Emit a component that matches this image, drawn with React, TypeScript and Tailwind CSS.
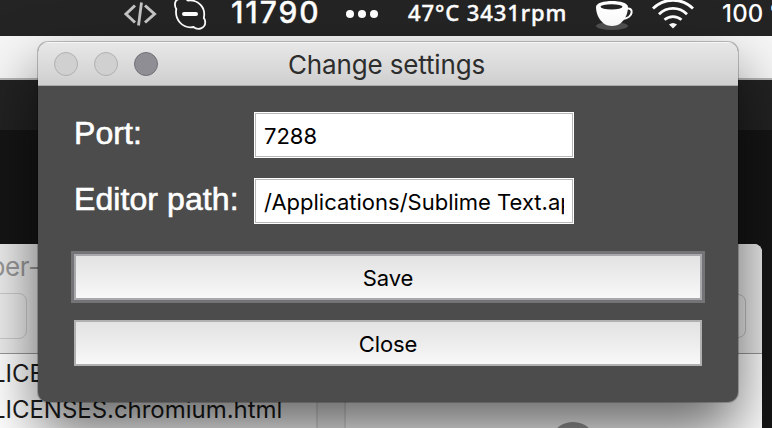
import type { ReactNode } from "react";

const SANS = "font-['Inter','Liberation_Sans',sans-serif]";

function MenuBar() {
  return (
    <header className="relative h-9 bg-[#242424] text-white">
      <svg className="absolute inset-0" width="772" height="36" viewBox="0 0 772 36" fill="none">
        <g stroke="#c4c4c4" strokeWidth="3">
          <path d="M135 5.500 126 14 135 22.500M145 5.500 154.500 14 145 22.500" />
          <path d="M141.500 2.500 138.500 25.500" strokeWidth="2.800" />
        </g>
        <path
          d="M179 -1C174.500 0 174 5 176.300 9C174.500 19 182 29 193.500 27C198 31 206.500 28 205 20.500C204.800 19.800 204.500 19 203.800 18C206 8 199 -0.500 188 0.500C185 -2 182 -2 179 -1Z"
          stroke="#fff"
          strokeWidth="1.800"
        />
        <path d="M184 14H196" stroke="#fff" strokeWidth="4" strokeLinecap="round" />
        <g fill="#fff">
          <circle cx="350" cy="14" r="4" />
          <circle cx="362" cy="14" r="4" />
          <circle cx="374" cy="14" r="4" />
        </g>
        <ellipse cx="612" cy="26" rx="16" ry="4" fill="#505050" />
        <path d="M596 7C596 -1 628 -1 628 7C628 15 623 26 612 26C601 26 596 15 596 7Z" fill="#fff" />
        <ellipse cx="611.500" cy="6.800" rx="11" ry="2.600" fill="#242424" />
        <path d="M626 9C634 6 634 18 623 19" stroke="#fff" strokeWidth="2" />
        <g stroke="#fff" strokeWidth="2.800">
          <path d="M653 8.500C664 -2.500 682 -2.500 693 8.500" />
          <path d="M659 14.300C667 6.500 679 6.500 687 14.300" />
          <path d="M664.500 19.800C669.500 15.500 676.500 15.500 681.500 19.800" />
        </g>
        <path d="M669 24.500Q673 21.300 677 24.500L673 28.500Z" fill="#fff" />
      </svg>
      <span className={`absolute left-[231px] top-0 whitespace-nowrap text-[30px] font-medium leading-[25px] tracking-[1.9px] [-webkit-text-stroke:0.3px_white] ${SANS}`}>
        11790
      </span>
      <span className="absolute left-[408px] top-0 whitespace-nowrap font-['Noto_Sans',sans-serif] text-[22px] font-medium leading-6 tracking-[0.9px] [-webkit-text-stroke:0.4px_white]">
        47°C 3431rpm
      </span>
      <span className={`absolute left-[722px] top-px whitespace-nowrap text-[24px] font-medium leading-[25px] tracking-[0.2px] [word-spacing:-1.5px] ${SANS}`}>
        100 %
      </span>
    </header>
  );
}

function FinderWindow() {
  return (
    <section className={`absolute -left-20 top-[244px] h-[300px] w-[842px] overflow-hidden rounded-lg bg-white ${SANS}`}>
      <div className="relative h-[110px] border-b border-[#999] bg-[#ededed]">
        <span className="absolute right-[722px] top-[5px] whitespace-nowrap text-[26px] leading-9 tracking-[-0.3px] text-[#999]">
          per-
        </span>
        <div className="absolute left-0 top-[49px] h-[46px] w-[107px] rounded-lg border border-[#ccc]" />
        <div className="absolute right-4 top-[50px] h-[44px] w-20 rounded-lg border border-[#c0c0c0]" />
      </div>
      <div className="flex flex-col pl-[72px] pt-0.5 text-[24px] leading-9 tracking-[-0.03px] text-[#1c1c1c]">
        <span>LICENSE</span>
        <span>LICENSES.chromium.html</span>
      </div>
      <div className="absolute left-[396px] top-[110px] h-[190px] w-[30px] border-x-2 border-[#e4e4e4] bg-[#f8f8f8]" />
      <div className="absolute left-[629px] top-[178px] size-12 rounded-full bg-[#9a9a9a]" />
    </section>
  );
}

function Field({ label, value }: { label: string; value: string }) {
  return (
    <label className="flex h-[46px] items-center">
      <span className="-mt-1 w-[180px] shrink-0 whitespace-nowrap font-['Liberation_Sans',sans-serif] text-[32px] leading-9 tracking-[0.08px] [-webkit-text-stroke:0.6px_white]">
        {label}
      </span>
      <span className="h-[46px] w-80 border border-white bg-white">
        <span className={`flex h-11 items-center border border-[#b8b8b8] px-2 text-[22px] text-black ${SANS}`}>
          <span className="w-full overflow-hidden whitespace-nowrap pt-0.5 tracking-[0px]">{value}</span>
        </span>
      </span>
    </label>
  );
}

function Button({ children, focused }: { children: ReactNode; focused?: boolean }) {
  return (
    <button
      className={`flex h-[46px] w-[628px] items-center justify-center border-2 bg-linear-to-b from-[#e2e2e2] to-[#f8f8f8] pt-0.5 text-[22px] tracking-[-0.1px] text-black ${SANS} ${
        focused ? "border-[#a9a9ad] shadow-[0_0_0_3px_#747476]" : "border-[#b0b0b0]"
      }`}
    >
      {children}
    </button>
  );
}

function SettingsDialog() {
  return (
    <main className="absolute left-[38px] top-[42px] h-[360px] w-[700px] overflow-hidden rounded-[10px] bg-[#4c4c4c] text-white shadow-[0_0_0_1px_rgba(0,0,0,0.22),0_30px_60px_rgba(0,0,0,0.6)]">
      <div className="relative flex h-11 items-center border-b border-[#aaa] bg-linear-to-b from-[#e8e8e8] to-[#cfcfcf] pl-4 shadow-[inset_0_1px_0_#f6f6f6]">
        <div className="flex gap-4">
          <i className="size-6 rounded-full border border-[#b0b0b0] bg-[#d0d0d0]" />
          <i className="size-6 rounded-full border border-[#b0b0b0] bg-[#d0d0d0]" />
          <i className="size-6 rounded-full border border-[#737278] bg-[#8f8e94]" />
        </div>
        <h1 className={`absolute inset-x-0 top-[5px] -ml-[3px] text-center text-[26px] leading-9 tracking-[-0.15px] text-[#2d2d2d] ${SANS}`}>
          Change settings
        </h1>
      </div>
      <div className="flex flex-col pl-9 pt-[26px]">
        <div className="flex flex-col gap-5">
          <Field label="Port:" value="7288" />
          <Field label="Editor path:" value="/Applications/Sublime Text.app" />
        </div>
        <div className="mt-[30px] flex flex-col gap-5">
          <Button focused>Save</Button>
          <Button>Close</Button>
        </div>
      </div>
    </main>
  );
}

export default function App() {
  return (
    <div className="relative h-[428px] w-[772px] overflow-hidden bg-[#151515]">
      <MenuBar />
      <div className="h-11 border-b-2 border-[#b5b5b5] bg-[#f6f6f6]" />
      <div className="h-[50px] bg-[#222]" />
      <FinderWindow />
      <SettingsDialog />
    </div>
  );
}
